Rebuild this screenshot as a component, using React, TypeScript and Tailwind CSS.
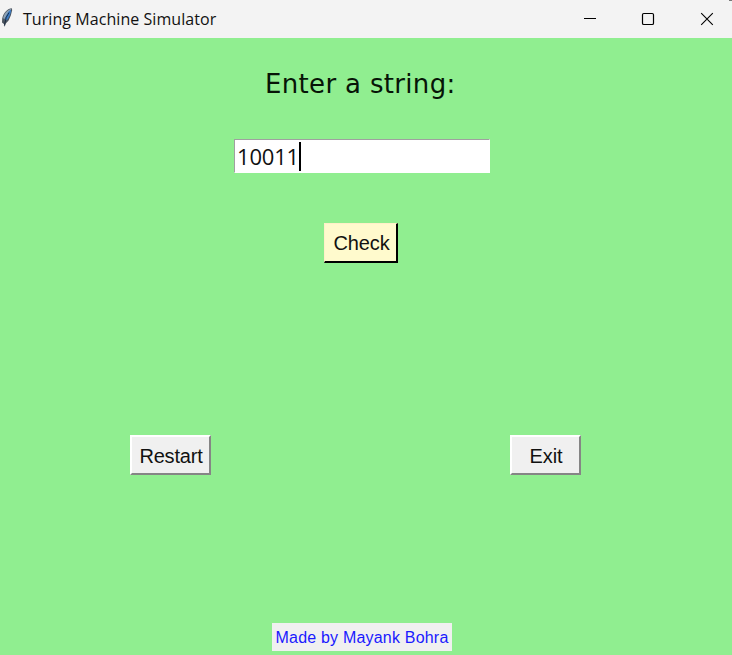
import { useState } from "react";

function Feather() {
  return (
    <svg className="block h-[22px] w-[14px] shrink-0" viewBox="0 0 14 22" aria-hidden="true">
      <path d="M11.8 1.2 C8 1.4 3.2 5.5 2.2 11.5 L2 15.5 L4.2 17.3 L4.6 20 L5.8 16.4 L8.6 13.4 L10.8 8.6 L12.2 3 Z" fill="#4b545e" />
      <path d="M11.6 1.8 C8.5 2.4 4.3 5.8 3.2 10.8 L4 12.6 L8 6.4 Z" fill="#8fa3b5" />
      <path d="M10.8 2.8 C8.4 4.3 5.2 8.6 4.8 14 L7.8 12.2 L10 8 L11.2 4 Z" fill="#3b7cc6" />
      <path d="M9 5.6 L6.2 10.4 L4.4 18.6" fill="none" stroke="#15263c" strokeWidth="0.9" />
    </svg>
  );
}

function TitleBar() {
  return (
    <header className="relative flex h-[38px] items-center bg-[#f3f3f3]">
      <div className="-mt-[3px]"><Feather /></div>
      <h1 className="ml-[9px] font-['Open_Sans','Noto_Sans',sans-serif] text-[16px] leading-[22px] tracking-[0.06px] whitespace-nowrap text-[#111]">
        Turing Machine Simulator
      </h1>
      <div className="ml-auto flex h-full">
        <button aria-label="Minimize" className="flex w-[58px] items-center justify-center">
          <svg className="mr-[2px] size-4" viewBox="0 0 16 16"><path d="M2 7.5h12" stroke="#000" /></svg>
        </button>
        <button aria-label="Maximize" className="flex w-[58px] items-center justify-center">
          <svg className="mr-[2px] size-4" viewBox="0 0 16 16"><rect x="2.5" y="2.5" width="11" height="11" rx="1.3" fill="none" stroke="#000" strokeWidth="1.2" /></svg>
        </button>
        <button aria-label="Close" className="mr-[-4px] flex w-[58px] items-center justify-center">
          <svg className="size-4" viewBox="0 0 16 16"><path d="M2.2 2.2 13.8 13.8M13.8 2.2 2.2 13.8" stroke="#000" strokeWidth="1.1" /></svg>
        </button>
      </div>
      <span className="absolute top-0 right-0 h-px w-[3px] bg-[#777]" />
    </header>
  );
}

export default function App() {
  const [value] = useState("10011");
  return (
    <div className="flex h-[655px] w-[732px] flex-col overflow-hidden bg-[#90ee90] font-['Liberation_Sans',Arial,sans-serif]">
      <TitleBar />
      <main className="flex flex-1 flex-col">
        <h2 className="mt-[29px] ml-[265px] font-['DejaVu_Sans',sans-serif] text-[26px] leading-[34px] tracking-[0.33px] whitespace-nowrap text-[#071407]">
          Enter a string:
        </h2>
        <div className="mt-[38px] ml-[234px] flex h-[34px] w-[256px] items-center border-t border-r border-b border-l border-t-[#a0a0a0] border-r-white border-b-white border-l-[#a0a0a0] bg-white pl-[2px]">
          <span className="font-['Open_Sans','Noto_Sans',sans-serif] text-[22px] leading-[30px] tracking-[-0.2px] text-[#111]">{value}</span>
          <span className="h-[29px] w-[2px] bg-black" />
        </div>
        <button className="mt-[50px] ml-[324px] h-[40px] w-[74px] border-t border-r-2 border-b-2 border-l border-t-[#fff0c8] border-r-black border-b-black border-l-[#fff0c8] bg-[#fffacd] pt-px pl-[2px] text-[20px] leading-[24px] tracking-[-0.1px] text-[#111]">
          Check
        </button>
        <div className="mt-[172px] flex">
          <button className="ml-[130px] h-[40px] w-[81px] border-t-2 border-r-2 border-b-2 border-l-2 border-t-white border-r-[#858585] border-b-[#858585] border-l-white bg-[#f0f0f0] pt-[2px] pl-px text-[20px] leading-[24px] tracking-[-0.2px] text-[#111]">
            Restart
          </button>
          <button className="ml-[299px] h-[40px] w-[71px] border-t-2 border-r-2 border-b-2 border-l-2 border-t-white border-r-[#858585] border-b-[#858585] border-l-white bg-[#f0f0f0] pt-[2px] pl-px text-[20px] leading-[24px] tracking-[-0.1px] text-[#111]">
            Exit
          </button>
        </div>
        <footer className="mt-[148px] ml-[272px] flex h-[28px] w-[180px] items-center justify-center bg-[#f0f0f0] pt-px text-[16px] leading-[20px] tracking-[0.2px] whitespace-nowrap text-[#1a1aff]">
          Made by Mayank Bohra
        </footer>
      </main>
    </div>
  );
}
